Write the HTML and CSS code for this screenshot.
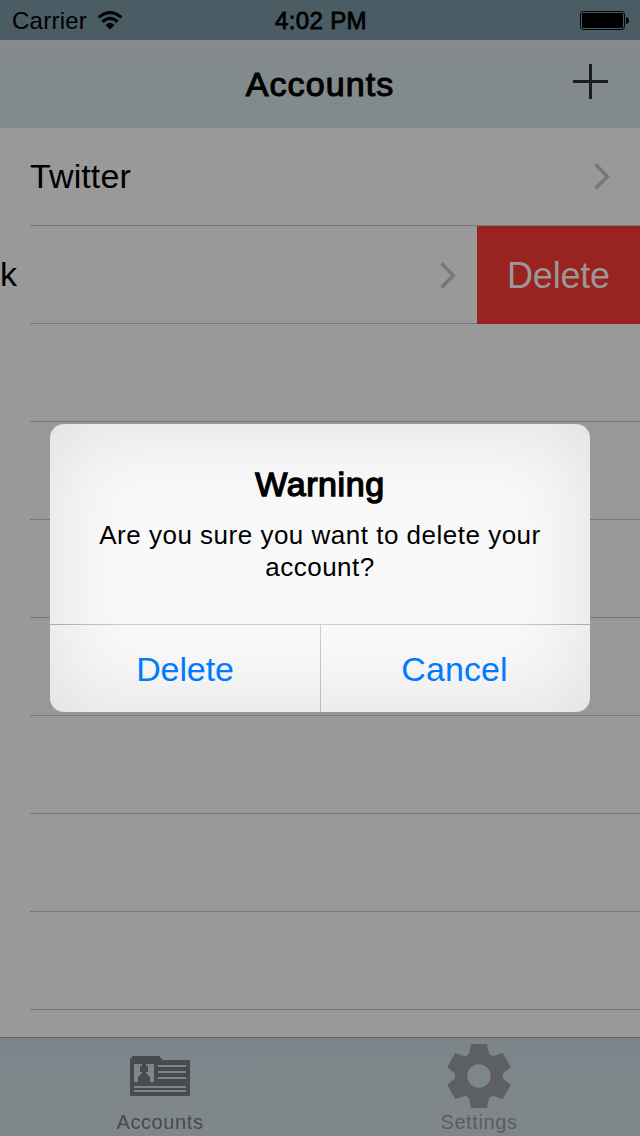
FILE: index.html
```
<!DOCTYPE html>
<html lang="en">
<head>
<meta charset="utf-8">
<title>Accounts</title>
<link rel="stylesheet" href="styles.css">
</head>
<body>
<div class="screen">
  <header class="status">
    <div class="carrier"><span class="carrier-name">Carrier</span>
      <svg class="wifi" width="26" height="19" viewBox="0 0 26 19"><path d="M1.6 6.4Q13-3.4 24.4 6.4" fill="none" stroke="#000" stroke-width="3.2"/><path d="M5.4 10.8Q13 4 20.6 10.8" fill="none" stroke="#000" stroke-width="3.2"/><path d="M8.6 14Q13 9.7 17.4 14L13 18.4Z"/></svg>
    </div>
    <div class="clock">4:02 PM</div>
    <svg class="battery" width="50" height="20" viewBox="0 0 50 20"><rect x=".5" y=".5" width="44" height="18" rx="2.8" fill="none" stroke="#000"/><rect x="2" y="2" width="41" height="15" rx="1.2"/><path d="M46 6q3 .6 3 3.5t-3 3.5z"/></svg>
  </header>
  <nav class="navbar">
    <h1 class="title">Accounts</h1>
    <svg class="plus" width="35" height="35" viewBox="0 0 35 35"><path d="M16 0h3v16h16v3H19v16h-3V19H0v-3h16z" fill="#1c1c1e"/></svg>
  </nav>
  <main class="list">
    <div class="row"><span class="label">Twitter</span><svg class="chevron" width="16" height="27" viewBox="0 0 16 27"><path d="M1.5 1.5 13.3 13.5 1.5 25.5" fill="none" stroke="#77777a" stroke-width="3.6"/></svg></div>
    <div class="row swiped"><span class="label">k</span><svg class="chevron" width="16" height="27" viewBox="0 0 16 27"><path d="M1.5 1.5 13.3 13.5 1.5 25.5" fill="none" stroke="#77777a" stroke-width="3.6"/></svg><div class="row-delete"><span>Delete</span></div></div>
    <div class="row"></div><div class="row"></div><div class="row"></div><div class="row"></div><div class="row"></div><div class="row"></div><div class="row"></div>
  </main>
  <footer class="tabs">
    <div class="tab accounts">
      <svg width="64" height="66" viewBox="0 0 64 66"><path d="M2 14h2v-2h28v2h2v2h28v36H2z" fill="#484b4b"/><g fill="#7d868a"><path d="M6 20h20v18H6zM30 21h28v2H30zM30 27h28v2H30zM30 33h28v2H30zM6 42h52v2H6zM6 46h52v2H6z"/></g><path d="M14 20h4v2h2v6h-2v2h2v2h2v6H10v-6h2v-2h2v-2h-2v-6h2z" fill="#484b4b"/></svg>
      <span class="tab-label">Accounts</span>
    </div>
    <div class="tab settings">
      <svg width="64" height="66" viewBox="-32 -32 64 66"><defs><path id="tooth" d="M-8-32H8L10-22 13-10H-13L-10-22Z"/></defs><g fill="#5d5f60"><circle r="24"/><use href="#tooth"/><use href="#tooth" transform="rotate(60)"/><use href="#tooth" transform="rotate(120)"/><use href="#tooth" transform="rotate(180)"/><use href="#tooth" transform="rotate(240)"/><use href="#tooth" transform="rotate(300)"/></g><circle r="11.7" fill="#7d868a"/></svg>
      <span class="tab-label">Settings</span>
    </div>
  </footer>
  <section class="alert" role="alertdialog">
    <div class="alert-body">
      <h2 class="alert-title">Warning</h2>
      <p class="message">Are you sure you want to delete your<br>account?</p>
    </div>
    <div class="actions"><div class="action">Delete</div><div class="action cancel">Cancel</div></div>
  </section>
</div>
</body>
</html>
```
FILE: styles.css
```
* { box-sizing: border-box; }
body { margin: 0; font-family: "Liberation Sans", Arial, sans-serif; color: #000; }
h1, h2, p { margin: 0; font-weight: 400; }
svg { display: block; flex: none; }
.screen { position: relative; display: flex; flex-direction: column; width: 640px; height: 1136px; overflow: hidden; background: #999; white-space: nowrap; }
.status { height: 40px; display: grid; grid-template-columns: 1fr auto 1fr; align-items: start; padding: 0 10px 0 12px; background: #4a5c64; }
.carrier { display: flex; }
.carrier-name { font-size: 24px; line-height: 42px; letter-spacing: .25px; }
.wifi { margin: 11px 0 0 10px; }
.clock { font-size: 24px; line-height: 42px; -webkit-text-stroke: .8px #000; letter-spacing: .35px; }
.battery { justify-self: end; margin-top: 11px; }
.navbar { height: 88px; display: grid; grid-template-columns: 1fr auto 1fr; padding-right: 32px; padding-left: 32px; background: linear-gradient(#848a8e, #818a8b); }
.title { grid-column: 2; font-size: 34px; line-height: 88px; letter-spacing: 1.1px; -webkit-text-stroke: 1.1px #000; }
.plus { justify-self: end; margin-top: 24px; }
.list { height: 909px; overflow: hidden; }
.row { height: 98px; margin-left: 30px; border-bottom: 1px solid #77777a; display: flex; align-items: center; justify-content: space-between; padding-right: 30px; font-size: 34px; }
.label { line-height: 94px; padding-bottom: 2px; letter-spacing: .1px; }
.swiped { margin-left: 0; padding: 0; border: 0; background: linear-gradient(#77777a, #77777a) 30px 97px / 447px 1px no-repeat; }
.swiped .chevron { margin-left: auto; margin-right: 21px; }
.row-delete { width: 163px; height: 98px; background: #99231f; color: #999; text-align: center; line-height: 99px; font-size: 36px; letter-spacing: -.2px; }
.tabs { height: 99px; display: grid; grid-template-columns: 1fr 1fr; border-top: 1px solid #606668; background: linear-gradient(#7c868a, #80878a); }
.tab { display: flex; flex-direction: column; align-items: center; padding-top: 6px; color: #484b4b; }
.settings { color: #5a5d5e; padding-right: 2px; }
.tab-label { font-size: 20px; line-height: 24px; letter-spacing: .6px; }
.alert { position: absolute; left: 50px; top: 424px; width: 540px; height: 288px; border-radius: 14px; overflow: hidden; background: #f9f9f9; box-shadow: inset 0 0 90px rgba(0, 0, 0, .11); text-align: center; }
.alert-body { height: 200px; padding-top: 40px; }
.alert-title { font-size: 34px; line-height: 40px; letter-spacing: .6px; -webkit-text-stroke: 1.4px #000; }
.message { font-size: 26px; line-height: 32px; padding-top: 15px; letter-spacing: .5px; }
.actions { height: 88px; display: grid; grid-template-columns: 270px 270px; border-top: 1px solid; border-image: linear-gradient(90deg, #aaa, #cfcfd1 15%, #cfcfd1 85%, #aaa) 1; color: #007aff; font-size: 34px; line-height: 89px; }
.action { letter-spacing: -.1px; }
.cancel { background: linear-gradient(#d0d0d4, #b4b4ba) 0 0 / 1px 100% no-repeat; padding-right: 1px; letter-spacing: .1px; }
```
